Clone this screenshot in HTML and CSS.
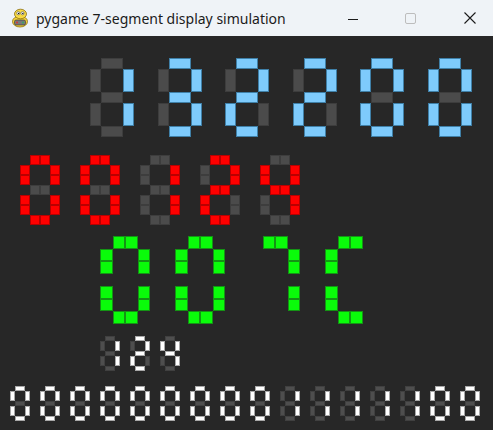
FILE: index.html
```html
<!DOCTYPE html>
<html lang="en">
<head>
<meta charset="utf-8">
<title>pygame 7-segment display simulation</title>
<link rel="stylesheet" href="styles.css">
</head>
<body>
<div class="window">
  <header class="titlebar">
    <svg class="app-icon" viewBox="0 0 18 20" aria-hidden="true">
      <ellipse cx="9" cy="13.5" rx="7.5" ry="5.5" fill="#f5d33a" stroke="#8a6d10" stroke-width="0.8"/>
      <ellipse cx="9.5" cy="6" rx="6" ry="4.8" fill="#f7da44" stroke="#8a6d10" stroke-width="0.8"/>
      <circle cx="7.3" cy="5.2" r="1.6" fill="#fff" stroke="#333" stroke-width="0.5"/>
      <circle cx="11.5" cy="5.2" r="1.6" fill="#fff" stroke="#333" stroke-width="0.5"/>
      <circle cx="7.6" cy="5.4" r="0.7" fill="#111"/>
      <circle cx="11.8" cy="5.4" r="0.7" fill="#111"/>
      <rect x="3.5" y="12" width="11" height="5" rx="1.5" fill="#7a7a7a" stroke="#333" stroke-width="0.6"/>
      <circle cx="6" cy="14.5" r="1" fill="#d33"/>
      <circle cx="12" cy="14.5" r="1" fill="#3a6"/>
    </svg>
    <span class="title">pygame 7-segment display simulation</span>
    <div class="controls">
      <svg class="ctl ctl-min" viewBox="0 0 10 10" aria-hidden="true"><path d="M0 5.5H10" stroke="#1b1b1b" stroke-width="1"/></svg>
      <svg class="ctl ctl-max" viewBox="0 0 11 11" aria-hidden="true"><rect x="0.5" y="0.5" width="10" height="10" rx="1.5" fill="none" stroke="#bdbdbd" stroke-width="1"/></svg>
      <svg class="ctl ctl-close" viewBox="0 0 12 12" aria-hidden="true"><path d="M0.5 0.5L11.5 11.5M11.5 0.5L0.5 11.5" stroke="#1b1b1b" stroke-width="1.1"/></svg>
    </div>
  </header>

  <main class="canvas">
    <div class="row blue">
      <div class="dg"><i></i><i class="on"></i><i class="on"></i><i></i><i></i><i></i><i></i></div>
      <div class="dg"><i class="on"></i><i class="on"></i><i class="on"></i><i class="on"></i><i></i><i></i><i class="on"></i></div>
      <div class="dg"><i class="on"></i><i class="on"></i><i></i><i class="on"></i><i class="on"></i><i></i><i class="on"></i></div>
      <div class="dg"><i class="on"></i><i class="on"></i><i></i><i class="on"></i><i class="on"></i><i></i><i class="on"></i></div>
      <div class="dg"><i class="on"></i><i class="on"></i><i class="on"></i><i class="on"></i><i class="on"></i><i class="on"></i><i></i></div>
      <div class="dg"><i class="on"></i><i class="on"></i><i class="on"></i><i class="on"></i><i class="on"></i><i class="on"></i><i></i></div>
    </div>

    <div class="row red split">
      <div class="dg"><i class="on"></i><i class="on"></i><i class="on"></i><i class="on"></i><i class="on"></i><i class="on"></i><i></i></div>
      <div class="dg"><i class="on"></i><i class="on"></i><i class="on"></i><i class="on"></i><i class="on"></i><i class="on"></i><i></i></div>
      <div class="dg"><i></i><i class="on"></i><i class="on"></i><i></i><i></i><i></i><i></i></div>
      <div class="dg"><i class="on"></i><i class="on"></i><i></i><i class="on"></i><i class="on"></i><i></i><i class="on"></i></div>
      <div class="dg"><i></i><i class="on"></i><i class="on"></i><i></i><i></i><i class="on"></i><i class="on"></i></div>
    </div>

    <div class="row green split">
      <div class="dg"><i class="on"></i><i class="on"></i><i class="on"></i><i class="on"></i><i class="on"></i><i class="on"></i><i></i></div>
      <div class="dg"><i class="on"></i><i class="on"></i><i class="on"></i><i class="on"></i><i class="on"></i><i class="on"></i><i></i></div>
      <div class="dg"><i class="on"></i><i class="on"></i><i class="on"></i><i></i><i></i><i></i><i></i></div>
      <div class="dg"><i class="on"></i><i></i><i></i><i class="on"></i><i class="on"></i><i class="on"></i><i></i></div>
    </div>

    <div class="row small">
      <div class="dg"><i></i><i class="on"></i><i class="on"></i><i></i><i></i><i></i><i></i></div>
      <div class="dg"><i class="on"></i><i class="on"></i><i></i><i class="on"></i><i class="on"></i><i></i><i class="on"></i></div>
      <div class="dg"><i></i><i class="on"></i><i class="on"></i><i></i><i></i><i class="on"></i><i class="on"></i></div>
    </div>

    <div class="row small bottom">
      <div class="dg"><i class="on"></i><i class="on"></i><i class="on"></i><i class="on"></i><i class="on"></i><i class="on"></i><i></i></div>
      <div class="dg"><i class="on"></i><i class="on"></i><i class="on"></i><i class="on"></i><i class="on"></i><i class="on"></i><i></i></div>
      <div class="dg"><i class="on"></i><i class="on"></i><i class="on"></i><i class="on"></i><i class="on"></i><i class="on"></i><i></i></div>
      <div class="dg"><i class="on"></i><i class="on"></i><i class="on"></i><i class="on"></i><i class="on"></i><i class="on"></i><i></i></div>
      <div class="dg"><i class="on"></i><i class="on"></i><i class="on"></i><i class="on"></i><i class="on"></i><i class="on"></i><i></i></div>
      <div class="dg"><i class="on"></i><i class="on"></i><i class="on"></i><i class="on"></i><i class="on"></i><i class="on"></i><i></i></div>
      <div class="dg"><i class="on"></i><i class="on"></i><i class="on"></i><i class="on"></i><i class="on"></i><i class="on"></i><i></i></div>
      <div class="dg"><i class="on"></i><i class="on"></i><i class="on"></i><i class="on"></i><i class="on"></i><i class="on"></i><i></i></div>
      <div class="dg"><i class="on"></i><i class="on"></i><i class="on"></i><i class="on"></i><i class="on"></i><i class="on"></i><i></i></div>
      <div class="dg"><i></i><i class="on"></i><i class="on"></i><i></i><i></i><i></i><i></i></div>
      <div class="dg"><i></i><i class="on"></i><i class="on"></i><i></i><i></i><i></i><i></i></div>
      <div class="dg"><i></i><i class="on"></i><i class="on"></i><i></i><i></i><i></i><i></i></div>
      <div class="dg"><i></i><i class="on"></i><i class="on"></i><i></i><i></i><i></i><i></i></div>
      <div class="dg"><i></i><i class="on"></i><i class="on"></i><i></i><i></i><i></i><i></i></div>
      <div class="dg"><i class="on"></i><i class="on"></i><i class="on"></i><i class="on"></i><i class="on"></i><i class="on"></i><i></i></div>
      <div class="dg"><i class="on"></i><i class="on"></i><i class="on"></i><i class="on"></i><i class="on"></i><i class="on"></i><i></i></div>
    </div>
  </main>
</div>
</body>
</html>
```

FILE: styles.css
```css
* {
  box-sizing: border-box;
  margin: 0;
  padding: 0;
}

html,
body {
  width: 493px;
  height: 430px;
  overflow: hidden;
}

body {
  background: #272727;
  font-family: "Noto Sans", "Segoe UI", sans-serif;
}

.window {
  display: flex;
  flex-direction: column;
  height: 430px;
}

/* ---------- title bar ---------- */
.titlebar {
  flex: 0 0 36px;
  height: 36px;
  background: #eff3f7;
  display: flex;
  align-items: center;
}

.app-icon {
  width: 18px;
  height: 20px;
  margin-left: 11px;
  flex: none;
}

.title {
  margin-left: 7px;
  font-size: 14px;
  color: #1b1b1b;
  white-space: nowrap;
}

.controls {
  margin-left: auto;
  display: flex;
  align-items: center;
  padding-right: 17px;
}

.ctl {
  display: block;
  flex: none;
}

.ctl-min {
  width: 10px;
  height: 10px;
  margin-top: 2px;
}

.ctl-max {
  width: 11px;
  height: 11px;
  margin-left: 47px;
}

.ctl-close {
  width: 12px;
  height: 12px;
  margin-left: 48px;
}

/* ---------- display canvas ---------- */
.canvas {
  flex: 1;
  display: flex;
  flex-direction: column;
  align-items: flex-start;
}

.row {
  display: flex;
  --on: #7ecbfc;
  --on-b: #3f80a8;
  --off: #4b4b4b;
  --off-b: #3d3d3d;
}

.dg {
  display: grid;
  flex: none;
}

/* segment placement: a b c d e f g */
.dg i:nth-child(1) { grid-area: 1 / 2 / 2 / 4; }
.dg i:nth-child(2) { grid-area: 2 / 4 / 4 / 5; }
.dg i:nth-child(3) { grid-area: 5 / 4 / 7 / 5; }
.dg i:nth-child(4) { grid-area: 7 / 2 / 8 / 4; }
.dg i:nth-child(5) { grid-area: 5 / 1 / 7 / 2; }
.dg i:nth-child(6) { grid-area: 2 / 1 / 4 / 2; }
.dg i:nth-child(7) { grid-area: 4 / 2 / 5 / 4; }

.dg i {
  display: block;
  background: var(--off);
  border: 1px solid var(--off-b);
}

.dg i.on {
  background: var(--on);
  border-color: var(--on-b);
}

/* blue row */
.blue {
  margin-top: 22px;
  margin-left: 90px;
  gap: 23.5px;
}

.blue .dg {
  grid-template-columns: 11px 11px 11px 11px;
  grid-template-rows: 11px 12px 11px 11px 12px 11px 11px;
}

/* split segments (two squares each) */
.split .dg i {
  display: flex;
  background: none;
  border: 0;
}

.split .dg i:nth-child(2),
.split .dg i:nth-child(3),
.split .dg i:nth-child(5),
.split .dg i:nth-child(6) {
  flex-direction: column;
}

.split .dg i::before,
.split .dg i::after {
  content: "";
  flex: 1;
  background: var(--off);
  border: 1px solid var(--off-b);
}

.split .dg i.on::before,
.split .dg i.on::after {
  background: var(--on);
  border-color: var(--on-b);
}

/* red row */
.red {
  --on: #ff0000;
  --on-b: #b80000;
  margin-top: 18px;
  margin-left: 20px;
  gap: 20px;
}

.red .dg {
  grid-template-columns: repeat(4, 10px);
  grid-template-rows: repeat(7, 10px);
}

/* green row */
.green {
  --on: #0afc0a;
  --on-b: #149414;
  margin-top: 11px;
  margin-left: 100px;
  gap: 25px;
}

.green .dg {
  grid-template-columns: repeat(4, 12.5px);
  grid-template-rows: repeat(7, 12.5px);
}

.green .dg i:not(.on) {
  visibility: hidden;
}

/* small white rows */
.small {
  --on: #ffffff;
  --on-b: #a8a8a8;
  --off: #4e4e4e;
  --off-b: #404040;
  margin-top: 12.5px;
  margin-left: 100px;
  gap: 10px;
}

.small .dg {
  grid-template-columns: repeat(4, 5px);
  grid-template-rows: repeat(7, 5px);
}

.bottom {
  margin-top: 15px;
  margin-left: 10px;
}
```
